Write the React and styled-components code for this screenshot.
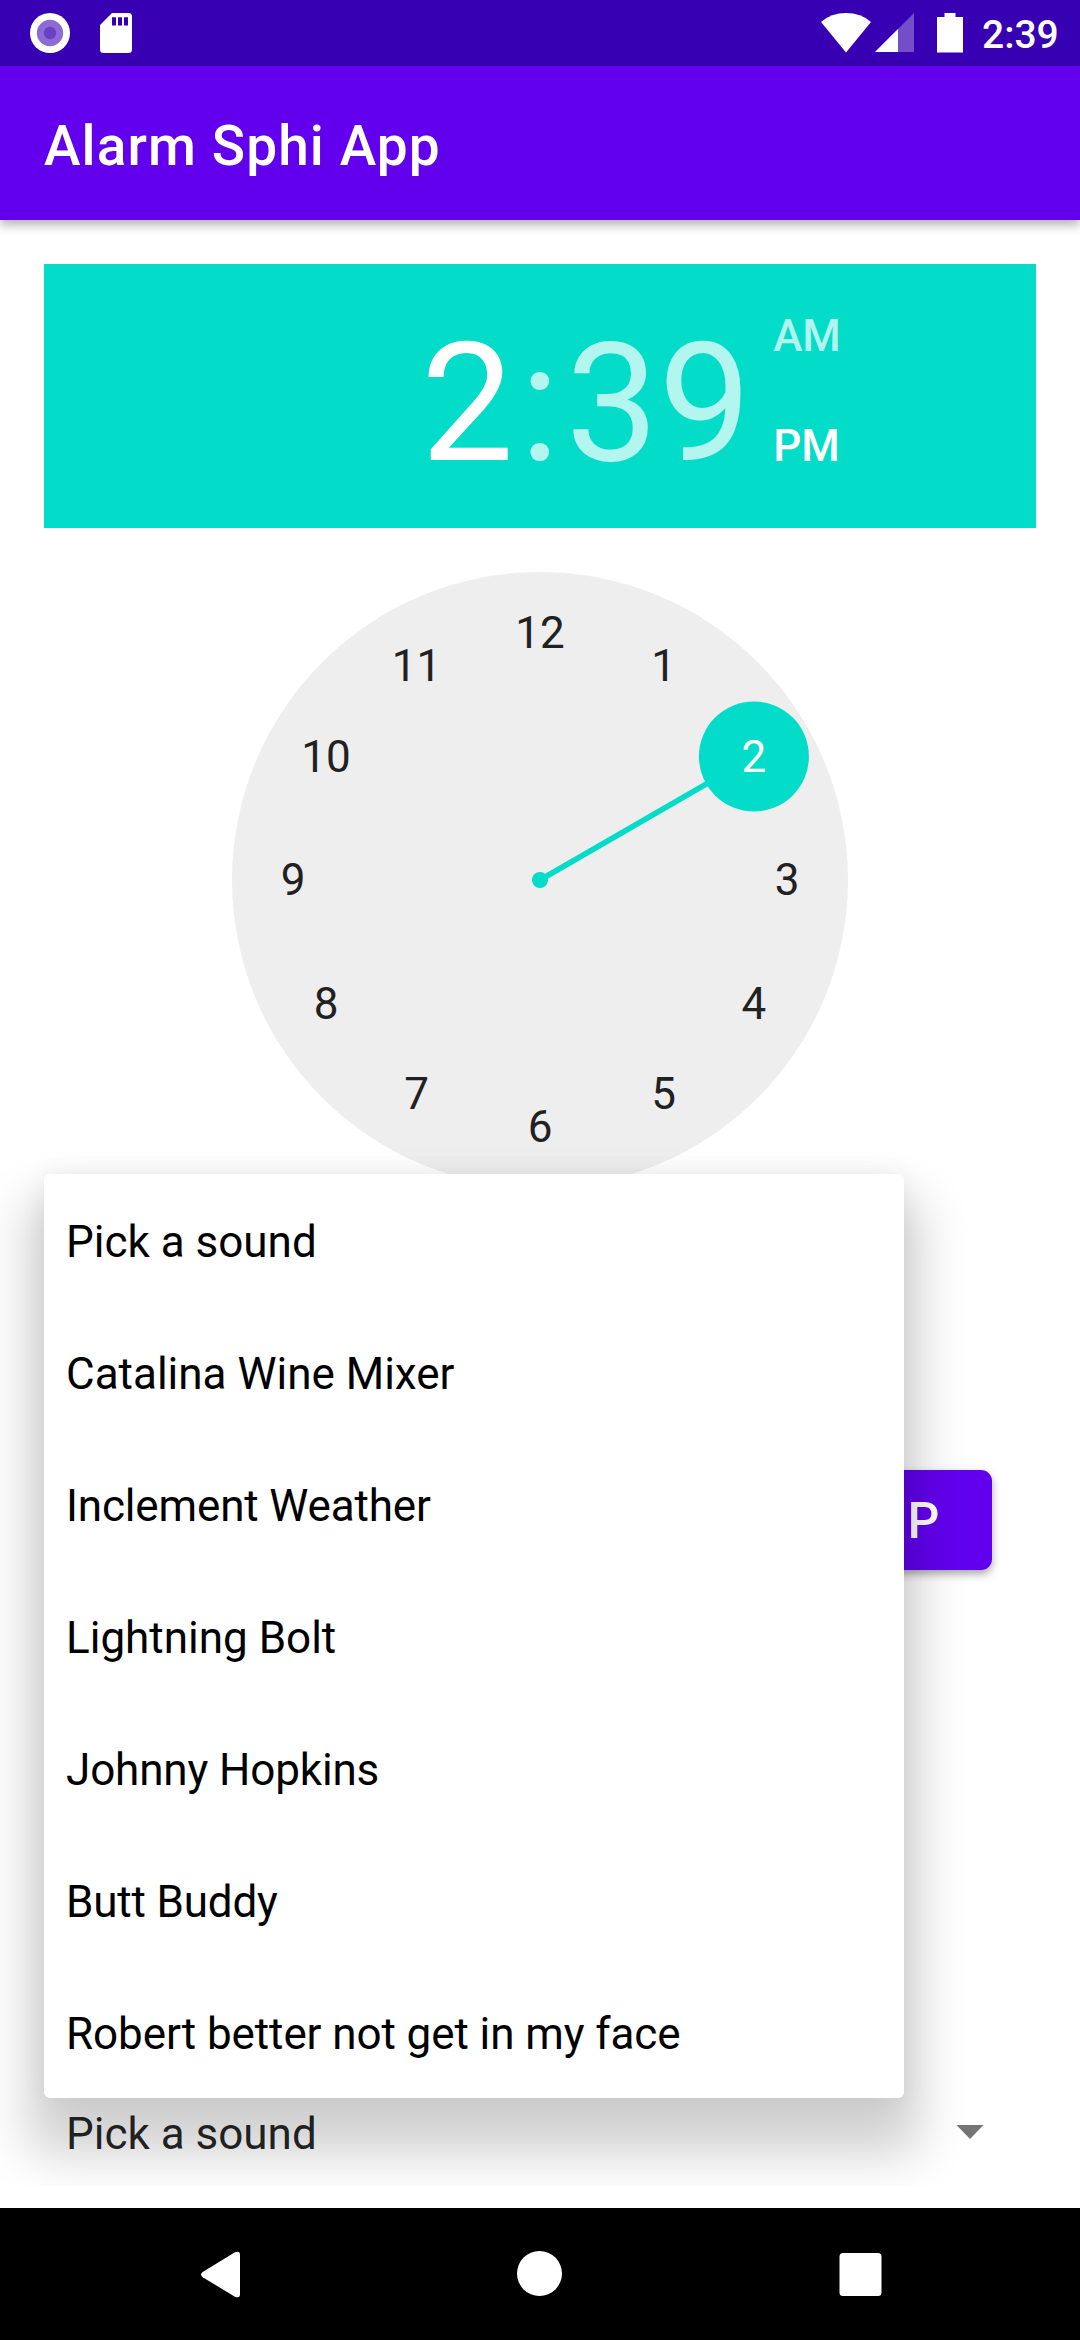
import React from "react";
import styled, { createGlobalStyle } from "styled-components";

const GlobalStyle = createGlobalStyle`
  * { box-sizing: border-box; }
  body { margin: 0; background: #fff; font-family: Roboto, "Noto Sans", sans-serif; }
`;

const Screen = styled.div`
  width: 1080px;
  height: 2340px;
  display: flex;
  flex-direction: column;
  background: #fff;
  overflow: hidden;
`;

const StatusBar = styled.header`
  flex: none;
  height: 66px;
  padding: 0 23px 0 30px;
  display: flex;
  align-items: center;
  justify-content: space-between;
  background: #3700b3;
`;

const StatusGroup = styled.div`
  display: flex;
  align-items: center;
`;

const StatusIcon = styled.svg`
  display: block;
  width: ${(p) => p.$w}px;
  height: 40px;
  margin-left: ${(p) => p.$gap || 0}px;
`;

const StatusClock = styled.span`
  margin-left: 19px;
  width: 75px;
  font-size: 39px;
  font-weight: 500;
  line-height: 40px;
  padding-top: 3px;
  color: #fff;
  white-space: nowrap;
`;

const AppBar = styled.div`
  flex: none;
  height: 154px;
  padding: 6px 44px 0;
  display: flex;
  align-items: center;
  background: #6200ee;
  box-shadow: 0 5px 10px rgba(0, 0, 0, 0.3);
  z-index: 1;
`;

const Title = styled.h1`
  margin: 0;
  font-size: 55px;
  font-weight: 500;
  letter-spacing: 1.1px;
  line-height: 64px;
  color: #fff;
`;

const Content = styled.main`
  position: relative;
  flex: none;
  height: 1966px;
  padding: 44px 44px 0;
  overflow: hidden;
  display: flex;
  flex-direction: column;
`;

const TimeHeader = styled.section`
  flex: none;
  height: 264px;
  display: flex;
  padding-left: 377px;
  background: #03dcc8;
`;

const TimeDigits = styled.div`
  display: flex;
  padding-top: 43px;
  font-size: 165px;
  line-height: 193px;
  color: rgba(255, 255, 255, 0.7);
`;

const Hour = styled.span`
  color: #fff;
`;

const Colon = styled.span`
  margin: 0 6px;
`;

const Meridiem = styled.div`
  display: flex;
  flex-direction: column;
  gap: 58px;
  padding-top: 46px;
  margin-left: 22px;
`;

const MeridiemLabel = styled.span`
  font-size: 44px;
  font-weight: 500;
  line-height: 52px;
  color: ${(p) => (p.$active ? "#fff" : "rgba(255,255,255,0.7)")};
`;

const ClockFace = styled.svg`
  flex: none;
  display: block;
  align-self: center;
  width: 616px;
  height: 616px;
  margin-top: 44px;
  font-size: 44px;
`;

const ButtonRow = styled.div`
  display: flex;
  justify-content: flex-end;
  margin-top: 282px;
  padding-right: 44px;
`;

const ActionButton = styled.button`
  width: 240px;
  height: 100px;
  padding: 2px 51px 0 0;
  border: 0;
  border-radius: 11px;
  background: #6200ee;
  color: #fff;
  font: 500 50px/60px Roboto, sans-serif;
  letter-spacing: 1.5px;
  text-align: right;
  box-shadow: 0 4px 8px rgba(0, 0, 0, 0.35);
`;

const Spinner = styled.div`
  display: flex;
  align-items: center;
  justify-content: space-between;
  height: 66px;
  margin-top: auto;
  margin-bottom: 21px;
  padding: 0 52px 0 22px;
  font-size: 44px;
  line-height: 52px;
  color: rgba(0, 0, 0, 0.87);
`;

const SpinnerValue = styled.span`
  padding-top: 3px;
`;

const Arrow = styled.svg`
  display: block;
  width: 28px;
  height: 14px;
`;

const Popup = styled.ul`
  position: absolute;
  left: 44px;
  top: 954px;
  width: 860px;
  margin: 0;
  padding: 0;
  list-style: none;
  border-radius: 6px;
  background: #fff;
  box-shadow: 0 40px 50px 16px rgba(0, 0, 0, 0.185), 0 0 24px rgba(0, 0, 0, 0.06);
`;

const Option = styled.li`
  height: 132px;
  padding: 4px 22px 0;
  display: flex;
  align-items: center;
  font-size: 44px;
  letter-spacing: ${(p) => p.$tracking}px;
  color: #000;
`;

const NavBar = styled.nav`
  flex: none;
  height: 132px;
  margin-top: 22px;
  display: flex;
  justify-content: center;
  background: #000;
`;

const NavIcon = styled.svg`
  display: block;
  width: 320px;
  height: 132px;
`;

const SOUNDS = [
  { name: "Pick a sound", tracking: 0 },
  { name: "Catalina Wine Mixer", tracking: 0 },
  { name: "Inclement Weather", tracking: -0.16 },
  { name: "Lightning Bolt", tracking: 0 },
  { name: "Johnny Hopkins", tracking: -0.14 },
  { name: "Butt Buddy", tracking: -0.18 },
  { name: "Robert better not get in my face", tracking: -0.09 },
];

const ACCENT = "#03dcc8";
const HOURS = [12, 1, 2, 3, 4, 5, 6, 7, 8, 9, 10, 11];

function polar(hour, r) {
  const a = (hour * Math.PI) / 6;
  return [308 + r * Math.sin(a), 308 - r * Math.cos(a)];
}

function Clock({ selected }) {
  const [sx, sy] = polar(selected, 247);
  return (
    <ClockFace viewBox="0 0 616 616">
      <circle cx="308" cy="308" r="308" fill="#eeeeee" />
      <line x1="308" y1="308" x2={sx} y2={sy} stroke={ACCENT} strokeWidth="5.5" />
      <circle cx="308" cy="308" r="8" fill={ACCENT} />
      <circle cx={sx} cy={sy} r="55" fill={ACCENT} />
      {HOURS.map((h) => {
        const [x, y] = polar(h, 247);
        return (
          <text key={h} x={x} y={y + 15} textAnchor="middle" fill={h === selected ? "#fff" : "#212121"}>
            {h}
          </text>
        );
      })}
    </ClockFace>
  );
}

export default function App() {
  return (
    <Screen>
      <GlobalStyle />
      <StatusBar>
        <StatusGroup>
          <StatusIcon $w={40} viewBox="0 0 40 40">
            <circle cx="20" cy="20" r="20" fill="#fff" />
            <circle cx="20" cy="20" r="13.2" fill="#8c6cd4" />
            <circle cx="20" cy="20" r="6.2" fill="#6a40c4" />
          </StatusIcon>
          <StatusIcon $w={32} $gap={30} viewBox="0 0 32 40">
            <path
              fillRule="evenodd"
              fill="#fff"
              d="M12 0H28.500Q32 0 32 3.500V36.500Q32 40 28.500 40H3.500Q0 40 0 36.500V12ZM12 4.300V12.500H16V4.300ZM18 4.300V12.500H22V4.300ZM24 4.300V12.500H28V4.300Z"
            />
          </StatusIcon>
        </StatusGroup>
        <StatusGroup>
          <StatusIcon $w={50} viewBox="0 0 50 40">
            <path d="M0 9Q10 0 25 0T50 9L25 39.500Z" fill="#fff" />
          </StatusIcon>
          <StatusIcon $w={39} $gap={4} viewBox="0 0 39 40">
            <path d="M0 39L39 0V39Z" fill="#fff" opacity="0.3" />
            <path d="M0 39L23 16V39Z" fill="#fff" />
          </StatusIcon>
          <StatusIcon $w={26} $gap={23} viewBox="0 0 26 40">
            <path d="M7.500 0H18.500V4H26V39.600H0V4H7.500Z" fill="#fff" />
          </StatusIcon>
          <StatusClock>2:39</StatusClock>
        </StatusGroup>
      </StatusBar>

      <AppBar>
        <Title>Alarm Sphi App</Title>
      </AppBar>

      <Content>
        <TimeHeader>
          <TimeDigits>
            <Hour>2</Hour>
            <Colon>:</Colon>
            <span>39</span>
          </TimeDigits>
          <Meridiem>
            <MeridiemLabel>AM</MeridiemLabel>
            <MeridiemLabel $active>PM</MeridiemLabel>
          </Meridiem>
        </TimeHeader>
        <Clock selected={2} />
        <ButtonRow>
          <ActionButton>STOP</ActionButton>
        </ButtonRow>
        <Spinner>
          <SpinnerValue>Pick a sound</SpinnerValue>
          <Arrow viewBox="0 0 28 14">
            <path d="M0.500 0H27.500L14 14Z" fill="#757575" />
          </Arrow>
        </Spinner>
        <Popup>
          {SOUNDS.map((s) => (
            <Option key={s.name} $tracking={s.tracking}>
              {s.name}
            </Option>
          ))}
        </Popup>
      </Content>

      <NavBar>
        <NavIcon viewBox="0 0 320 132">
          <path
            d="M142.700 64Q139.300 66.500 142.700 69.300L174.500 88.400Q180 91 180 86V47Q180 42 174.500 44.500Z"
            fill="#fff"
          />
        </NavIcon>
        <NavIcon viewBox="0 0 320 132">
          <circle cx="159.500" cy="65.500" r="22.500" fill="#fff" />
        </NavIcon>
        <NavIcon viewBox="0 0 320 132">
          <rect x="139.500" y="45" width="42" height="43" rx="3.500" fill="#fff" />
        </NavIcon>
      </NavBar>
    </Screen>
  );
}
